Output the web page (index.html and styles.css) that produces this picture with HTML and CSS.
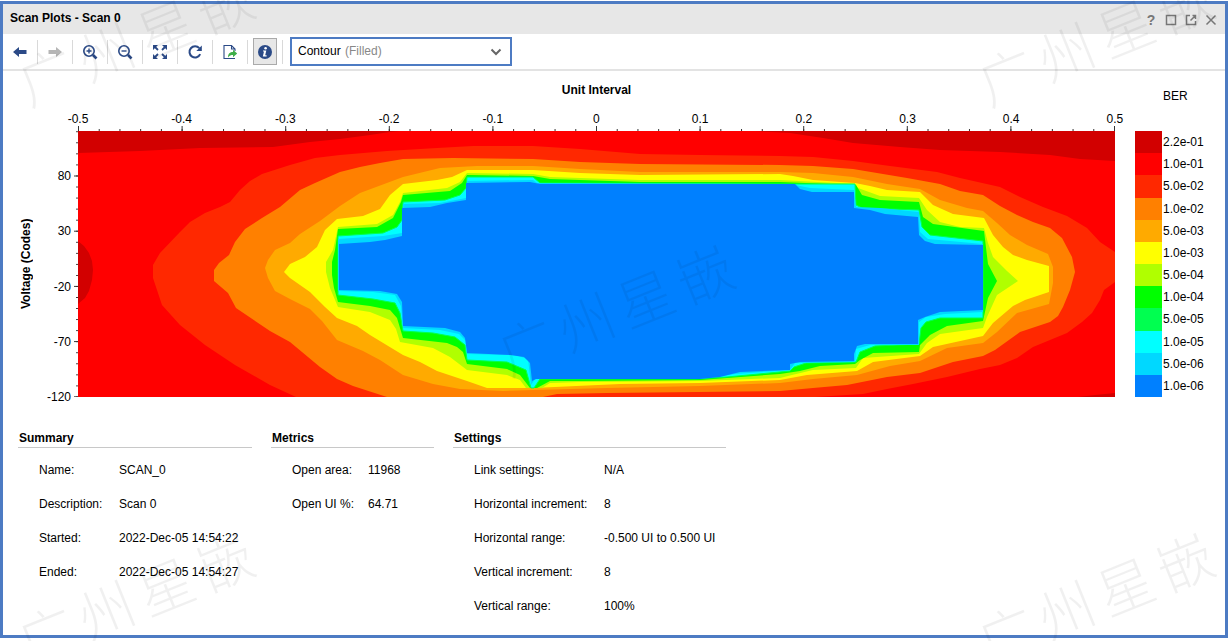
FILE: index.html
```html
<!DOCTYPE html>
<html lang="en">
<head>
<meta charset="utf-8">
<title>Scan Plots - Scan 0</title>
<link rel="stylesheet" href="styles.css">
</head>
<body>
<main class="window">
  <header class="titlebar">
    <h1 class="titlebar-name">Scan Plots - Scan 0</h1>
    <div class="titlebar-actions">
      <button class="win-btn" type="button">?</button>
      <button class="win-btn" type="button" aria-label="Maximize"><svg width="12" height="12" viewBox="0 0 12 12"><rect x="1.500" y="1.500" width="9" height="9" class="win-line"/></svg></button>
      <button class="win-btn" type="button" aria-label="Float"><svg width="12" height="12" viewBox="0 0 12 12"><path d="M5 1.500H1.500v9h9V7M5.500 6.500L10 2M7.500 1.500h3V5" class="win-line"/></svg></button>
      <button class="win-btn" type="button" aria-label="Close"><svg width="12" height="12" viewBox="0 0 12 12"><path d="M1.500 1.500l9 9M10.500 1.500l-9 9" class="win-line"/></svg></button>
    </div>
  </header>

  <div class="toolbar" role="toolbar" aria-label="Plot tools">
    <div class="tool"><button class="tool-btn" type="button" aria-label="Previous"><svg width="16" height="16" viewBox="0 0 16 16"><path d="M1 8l6-5v3h7.500v4H7v3z" fill="#2b4a87"/></svg></button></div>
    <div class="tool"><button class="tool-btn" type="button" aria-label="Next"><svg width="16" height="16" viewBox="0 0 16 16"><path d="M15 8L9 3v3H1.500v4H9v3z" fill="#b5b5b5"/></svg></button></div>
    <div class="tool"><button class="tool-btn" type="button" aria-label="Zoom in"><svg width="16" height="16" viewBox="0 0 16 16"><circle cx="7" cy="7" r="5.200" fill="none" stroke="#2b4a87" stroke-width="1.600"/><path d="M4.500 7h5M7 4.500v5" stroke="#2b4a87" stroke-width="1.400"/><path d="M11 11l3.500 3.500" stroke="#2b4a87" stroke-width="2.600"/></svg></button></div>
    <div class="tool"><button class="tool-btn" type="button" aria-label="Zoom out"><svg width="16" height="16" viewBox="0 0 16 16"><circle cx="7" cy="7" r="5.200" fill="none" stroke="#2b4a87" stroke-width="1.600"/><path d="M4.500 7h5" stroke="#2b4a87" stroke-width="1.400"/><path d="M11 11l3.500 3.500" stroke="#2b4a87" stroke-width="2.600"/></svg></button></div>
    <div class="tool"><button class="tool-btn" type="button" aria-label="Zoom fit"><svg width="16" height="16" viewBox="0 0 16 16"><path d="M1 1h5L1 6zM15 1v5l-5-5zM1 15v-5l5 5zM15 15h-5l5-5z" fill="#2b4a87"/><path d="M2.500 2.500L6 6M13.500 2.500L10 6M2.500 13.500L6 10M13.500 13.500L10 10" stroke="#2b4a87" stroke-width="1.800"/></svg></button></div>
    <div class="tool"><button class="tool-btn" type="button" aria-label="Refresh"><svg width="16" height="16" viewBox="0 0 16 16"><path d="M13.200 10.200A5.600 5.600 0 1 1 12.300 4.200" fill="none" stroke="#2b4a87" stroke-width="2"/><path d="M14.800 1.500V7H9.300z" fill="#2b4a87"/></svg></button></div>
    <div class="tool"><button class="tool-btn" type="button" aria-label="Export"><svg width="16" height="16" viewBox="0 0 16 16"><path d="M13 7V5L9.500 1.500H2v13h11M9.500 1.500V5H13" fill="none" stroke="#2b4a87" stroke-width="1.100"/><path d="M6 13.500c0-4 2-5.500 5-5.500V5.800l4.200 3.700-4.200 3.700V11c-2 0-3.500.500-5 2.500z" fill="#3fae49"/></svg></button></div>
    <div class="tool"><button class="tool-btn tool-btn-on" type="button" aria-label="Details" aria-pressed="true"><svg width="16" height="16" viewBox="0 0 16 16"><circle cx="8" cy="8" r="7" fill="#2b4a87"/><circle cx="8.600" cy="4.300" r="1.300" fill="#fff"/><path d="M6 6.500h3.300L8.200 11.300H9.600V12.500H5.800L7 7.600H6z" fill="#fff"/></svg></button></div>
    <label class="plot-type">
      <select class="plot-select" aria-label="Plot type"><option>Contour</option></select>
      <span class="plot-style">(Filled)</span>
      <svg class="plot-arrow" width="12" height="8" viewBox="0 0 12 8"><path d="M1.500 1.500L6 6l4.500-4.500" fill="none" stroke="#666" stroke-width="2"/></svg>
    </label>
  </div>

  <section class="chart" aria-label="Eye scan">
    <div class="x-head">
      <div class="axis-title">Unit Interval</div>
      <div class="x-labels"><span>-0.5</span><span>-0.4</span><span>-0.3</span><span>-0.2</span><span>-0.1</span><span>0</span><span>0.1</span><span>0.2</span><span>0.3</span><span>0.4</span><span>0.5</span></div>
    </div>
    <div class="legend-title">BER</div>
    <div class="y-head">
      <div class="axis-title y-title">Voltage (Codes)</div>
      <div class="y-labels"><span>80</span><span>30</span><span>-20</span><span>-70</span><span>-120</span></div>
    </div>
    <svg class="plot" viewBox="78 131 1037 266" preserveAspectRatio="none">
      <defs>
        <pattern id="xMinor" x="78" y="0" width="20.720" height="400" patternUnits="userSpaceOnUse"><path d="M.5 0v400" stroke="#333"/></pattern>
        <pattern id="xMajor" x="78" y="0" width="103.600" height="400" patternUnits="userSpaceOnUse"><path d="M.5 0v400" stroke="#333"/></pattern>
        <pattern id="yMinor" x="0" y="131.300" width="200" height="11.050" patternUnits="userSpaceOnUse"><path d="M0 .5h200" stroke="#333"/></pattern>
        <pattern id="yMajor" x="0" y="175.500" width="200" height="55.200" patternUnits="userSpaceOnUse"><path d="M0 .5h200" stroke="#333"/></pattern>
      </defs>
      <rect x="78" y="129" width="1037" height="2" fill="url(#xMinor)"/>
      <rect x="78" y="126" width="1037" height="5" fill="url(#xMajor)"/>
      <rect x="76" y="131" width="2" height="266" fill="url(#yMinor)"/>
      <rect x="74" y="170" width="4" height="227" fill="url(#yMajor)"/>
      <rect x="78" y="131" width="1037" height="266" fill="#ff0000"/>
      <path fill="#d20000" d="M78 131V153L140 151 200 148 273 147 310 142 340 139 370 135 390 132 400 131zM755 131L790 133 823 138 853 143 900 147 940 150 1000 152 1050 155 1080 159 1115 161V131zM78 241L84 246 89 253 92 261 93 270 92 280 89 291 85 298 78 304zM1078 397L1095 395 1115 393V397z"/>
      <path fill="#ff2800" d="M340 155L315 158 290 165 262 174 250 181 240 190 230 202 220 207 205 213 190 222 180 232 160 253 153 265 153 278 157 290 162 305 180 325 205 345 235 365 270 385 296 397H815L863 394 887 389 913 384 947 377 980 369 1000 365 1017 358 1033 347 1067 333 1082 322 1092 313 1100 300 1104 290 1115 282V252L1100 242 1087 228 1067 216 1043 207 1020 197 1000 187 960 178 937 172 890 166 853 161 813 157 780 156 700 155 640 154 580 149 533 146 473 146 437 148 387 151z"/>
      <path fill="#ff8000" d="M340 172L315 183 300 190 280 207 262 218 245 229 235 242 229 255 219 263 214 270 214 281 228 293 236 308 270 331 290 342 320 367 337 379 353 386 387 397H543L557 394 607 393 780 391 813 388 847 385 887 377 920 373 953 362 983 356 995 350 1020 332 1050 322 1058 316 1063 307 1070 290 1075 272 1072 257 1062 238 1050 228 1033 222 1017 215 1000 206 983 195 960 191 940 184 907 178 853 169 813 166 780 165 640 164 580 162 533 159 453 158 403 159 380 163 360 167z"/>
      <path fill="#ffaa00" d="M340 206L320 221 300 234 290 243 275 250 268 260 265 268 268 278 275 291 290 299 310 309 322 321 337 340 363 351 380 360 403 375 433 384 460 389 503 391 533 390 607 388 700 386 780 383 813 379 857 375 890 366 920 361 947 348 983 343 997 332 1017 313 1049 304 1053 283 1053 267 1048 254 1027 245 1010 235 997 223 983 211 967 208 940 200 920 189 887 184 853 177 813 173 780 172 640 172 580 169 533 166 477 166 440 168 403 177 360 193z"/>
      <path fill="#ffff00" d="M337 219L325 230 317 247 305 257 290 264 284 272 290 278 310 292 325 307 337 318 357 326 370 335 403 355 420 362 437 371 467 381 487 388 533 388 620 384 700 383 780 380 807 375 857 371 873 362 920 356 933 347 983 336 993 323 1013 306 1025 300 1049 292 1049 266 1027 260 1013 255 1003 247 993 235 984 218 953 214 933 205 920 192 887 190 870 186 855 183 813 180 793 176 780 174 640 175 580 173 533 170 467 170 452 177 437 180 403 184 390 195 380 209 363 216z"/>
      <path fill="#b0ff00" d="M338 227L333 250 326 262 326 272 330 288 338 307 370 312 390 320 396 329 400 342 433 348 450 357 467 370 507 375 520 380 526 388H542L550 383 580 382 700 381 780 378 792 375 813 370 856 368 863 358 919 354 927 343 940 334 983 328 987 317 997 295 1018 281 1007 271 993 257 988 243 984 228 960 227 940 222 927 210 919 198 880 196 858 188 855 184 780 180 640 180 550 177 533 174 467 173 460 182 447 188 403 193 400 202 393 215 377 224z"/>
      <path fill="#00ff00" d="M338 229L335 250 332 262 332 275 334 288 338 302 370 306 390 310 397 318 403 338 447 343 457 347 463 352 467 364 507 369 520 375 530 388H537L550 381 580 381 700 380 780 374 800 371 820 366 855 364 860 360 873 353 919 352 920 345 930 335 947 326 983 321 988 298 997 281 988 264 984 231 933 224 923 217 919 202 880 200 862 195 856 185 780 182 640 182 550 179 533 176 467 175 462 183 450 191 403 195 401 202 393 218 377 227z"/>
      <path class="cyan" d="M338 236L383 233 397 227 402 220 403 202 445 200 460 195 466 188 467 177 533 177 540 183 780 184 855 184 856 205 862 208 919 210 922 227 930 235 983 241V318L940 318 926 322 921 328 919 344 875 346 860 352 856 362 806 363 794 367 790 371 727 377 695 379H540L534 388H531L526 370 507 362 467 360 465 345 455 337 433 333 403 331 400 313 395 303 373 299 338 295z"/>
      <path fill="#00d8ff" d="M338 239L383 236 402 233 403 204 440 203 466 198 467 181 533 180 537 183 790 184 810 188 854 190 856 207 880 208 919 212 920 232 928 239 983 244V312L945 314 926 317 919 322V345L870 345 856 349 855 362 795 363 790 370 735 374 700 379H535L531 385 528 359 515 355 467 354V342L459 334 440 330 403 328 401 306 395 295 373 292 338 291z"/>
      <path fill="#0080ff" d="M339 244L370 242 385 240 402 236V208L430 207 447 203 466 200V183L530 182 540 184H795L800 189 812 192H854V208L870 210 885 214 918 217 919 235 925 241 935 244 983 245V310L940 312 925 317 918 320V344H865L857 346 854 354V361L800 362 790 364V370L740 372 720 377 700 379H536L532 381 530 363 524 357 510 355 467 353 465 338 460 332 445 328 403 326 402 302 397 294 380 291 339 290z"/>
    </svg>
    <ul class="legend">
      <li class="ber-a">2.2e-01</li><li class="ber-b">1.0e-01</li><li class="ber-c">5.0e-02</li><li class="ber-d">1.0e-02</li><li class="ber-e">5.0e-03</li><li class="ber-f">1.0e-03</li><li class="ber-g">5.0e-04</li><li class="ber-h">1.0e-04</li><li class="ber-i">5.0e-05</li><li class="ber-j">1.0e-05</li><li class="ber-k">5.0e-06</li><li class="ber-l">1.0e-06</li>
    </ul>
  </section>

  <div class="details">
    <section class="group summary">
      <h2>Summary</h2>
      <dl><dt>Name:</dt><dd>SCAN_0</dd><dt>Description:</dt><dd>Scan 0</dd><dt>Started:</dt><dd>2022-Dec-05 14:54:22</dd><dt>Ended:</dt><dd>2022-Dec-05 14:54:27</dd></dl>
    </section>
    <section class="group metrics">
      <h2>Metrics</h2>
      <dl><dt>Open area:</dt><dd>11968</dd><dt>Open UI %:</dt><dd>64.71</dd></dl>
    </section>
    <section class="group settings">
      <h2>Settings</h2>
      <dl><dt>Link settings:</dt><dd>N/A</dd><dt>Horizontal increment:</dt><dd>8</dd><dt>Horizontal range:</dt><dd>-0.500 UI to 0.500 UI</dd><dt>Vertical increment:</dt><dd>8</dd><dt>Vertical range:</dt><dd>100%</dd></dl>
    </section>
  </div>
</main>

<div class="watermarks" aria-hidden="true">
  <div class="mark mark-tl"><span>广</span><span>州</span><span>星</span><span>嵌</span></div>
  <div class="mark mark-tr"><span>广</span><span>州</span><span>星</span><span>嵌</span></div>
  <div class="mark mark-mid"><span>广</span><span>州</span><span>星</span><span>嵌</span></div>
  <div class="mark mark-bl"><span>广</span><span>州</span><span>星</span><span>嵌</span></div>
  <div class="mark mark-br"><span>广</span><span>州</span><span>星</span><span>嵌</span></div>
</div>
</body>
</html>
```
FILE: styles.css
```css
* { box-sizing: border-box; }

body {
  margin: 0;
  padding: 1px 2px 3px 0;
  min-height: 100vh;
  display: flex;
  position: relative;
  background: #fff;
  color: #000;
  font: 12px/16px "Liberation Sans", Arial, sans-serif;
}

.window {
  flex: 1;
  min-width: 0;
  border: 3px solid #4d7bc3;
  background: #fff;
}

/* Title bar */
.titlebar {
  display: flex;
  align-items: center;
  justify-content: space-between;
  height: 30px;
  padding: 0 6px 2px 7px;
  background: #e7e7e7;
}
.titlebar-name { margin: 0; font-size: 12px; line-height: 16px; }
.titlebar-actions { display: flex; gap: 4px; padding-top: 4px; }
.win-btn {
  display: flex;
  align-items: center;
  justify-content: center;
  width: 16px;
  height: 16px;
  padding: 0;
  border: 0;
  background: none;
  color: #777;
  font: bold 14px/16px "Liberation Sans", Arial, sans-serif;
}
.win-line { fill: none; stroke: #777; stroke-width: 1.5; }

/* Toolbar */
.toolbar {
  display: flex;
  align-items: center;
  height: 37px;
  border-bottom: 2px solid #e3e3e3;
}
.tool {
  display: flex;
  justify-content: center;
  align-items: center;
  width: 35px;
  height: 24px;
  border-right: 1px solid #d9d9d9;
}
.tool-btn {
  display: flex;
  flex: none;
  align-items: center;
  justify-content: center;
  width: 24px;
  height: 27px;
  padding: 0;
  border: 1px solid transparent;
  background: none;
}
.tool-btn-on { border-color: #aaa; background: #e7e7e7; }
.plot-type { position: relative; margin-left: 7px; }
.plot-select {
  display: block;
  width: 222px;
  height: 29px;
  padding: 0 6px 2px;
  border: 2px solid #4d7bc3;
  border-radius: 0;
  background: #fff;
  color: #000;
  font: inherit;
  appearance: none;
}
.plot-style { position: absolute; left: 55px; top: 6px; color: #888; pointer-events: none; }
.plot-arrow { position: absolute; right: 10px; top: 11px; pointer-events: none; }

/* Chart */
.chart {
  display: grid;
  grid-template-columns: 75px 1fr 110px;
  grid-template-rows: 60px 266px;
}
.axis-title { font-weight: bold; text-align: center; }
.x-head { grid-column: 2; padding-top: 11px; }
.x-labels { display: flex; justify-content: space-between; padding-top: 13px; }
.x-labels span { display: flex; justify-content: center; width: 0; }
.legend-title { padding: 17px 0 0 48px; }
.y-head { display: flex; padding-left: 15px; }
.y-title { writing-mode: vertical-rl; transform: rotate(180deg); }
.y-labels {
  flex: 1;
  display: flex;
  flex-direction: column;
  justify-content: space-between;
  padding: 45px 7px 0 0;
}
.y-labels span { display: flex; align-items: center; justify-content: flex-end; height: 0; }
.plot { display: block; width: 100%; height: 100%; overflow: visible; }

.legend {
  display: flex;
  flex-direction: column;
  margin: 0 0 0 20px;
  padding: 0;
  list-style: none;
}
.legend li { flex: 1; display: flex; align-items: center; gap: 1px; }
.legend li::before { content: ""; align-self: stretch; width: 27px; background: var(--ber); }
.ber-a { --ber: #d20000; }
.ber-b { --ber: #ff0000; }
.ber-c { --ber: #ff2800; }
.ber-d { --ber: #ff8000; }
.ber-e { --ber: #ffaa00; }
.ber-f { --ber: #ffff00; }
.ber-g { --ber: #b0ff00; }
.ber-h { --ber: #00ff00; }
.ber-i { --ber: #00ff50; }
.ber-j { --ber: #00ffff; }
.ber-k { --ber: #00d8ff; }
.ber-l { --ber: #0080ff; }
.cyan { fill: #00ffff; stroke: #00ff50; stroke-width: 1; }

/* Details */
.details { display: flex; gap: 19px; padding: 33px 15px 0; }
.group h2 {
  margin: 0 0 5px;
  padding: 0 0 1px 1px;
  border-bottom: 1px solid #c8c8c8;
  font-size: 12px;
  line-height: 16px;
}
.group dl { display: grid; margin: 0; padding-left: 21px; line-height: 34px; }
.group dd { margin: 0; }
.summary { width: 234px; }
.summary dl { grid-template-columns: 80px 1fr; }
.metrics { width: 163px; }
.metrics dl { grid-template-columns: 76px 1fr; }
.settings { width: 273px; }
.settings dl { grid-template-columns: 130px 1fr; }

/* Watermarks */
.watermarks { position: absolute; inset: 0; overflow: hidden; pointer-events: none; }
.mark {
  position: absolute;
  display: flex;
  gap: 8px;
  color: rgba(0, 0, 0, 0.06);
  font: 300 56px/56px "Noto Sans CJK SC", sans-serif;
  transform: translate(-50%, -50%) rotate(-22deg);
}
.mark-tl { left: 11%; top: 6%; }
.mark-tr { left: 89%; top: 6%; }
.mark-mid { left: 50%; top: 48%; }
.mark-bl { left: 11%; top: 93%; }
.mark-br { left: 89%; top: 93%; }
```
